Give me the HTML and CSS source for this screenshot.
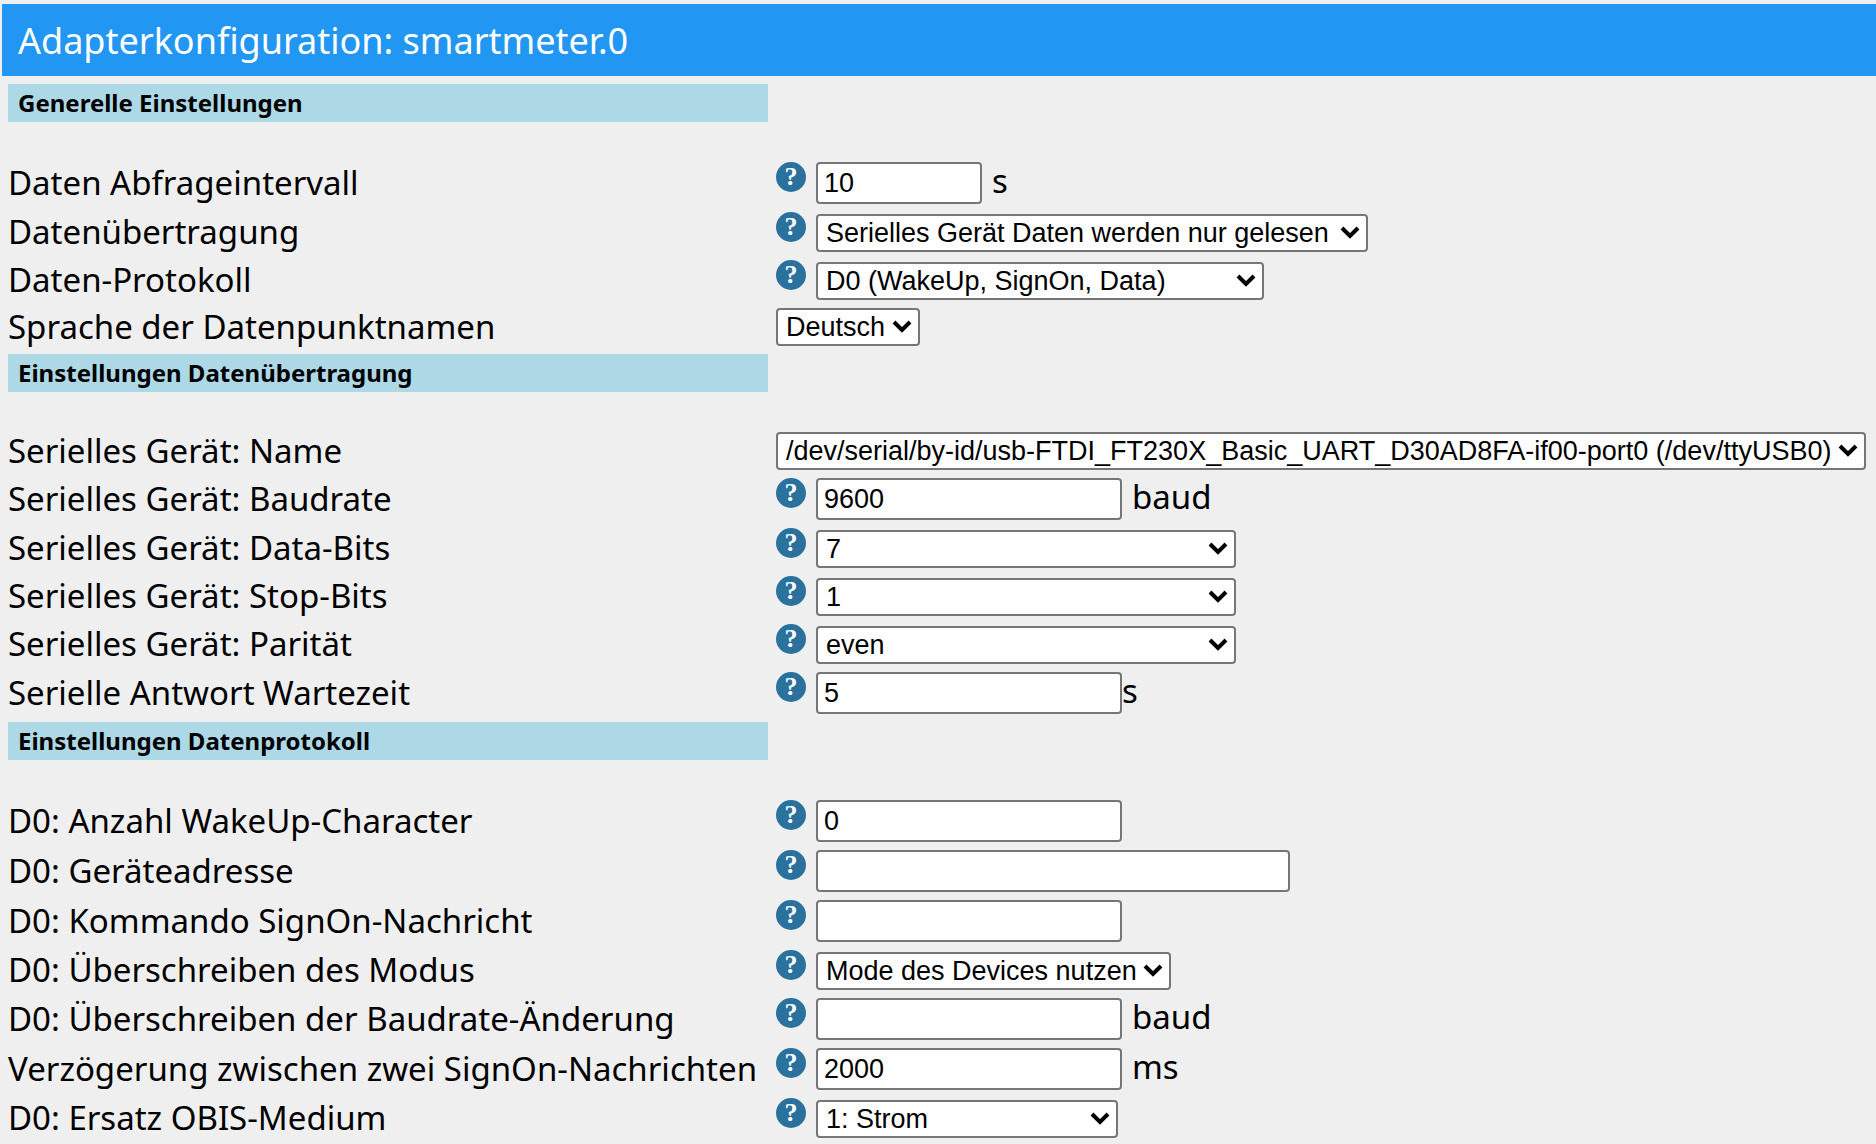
FILE: index.html
```html
<!DOCTYPE html>
<html lang="de">
<head>
<meta charset="utf-8">
<title>Adapterkonfiguration: smartmeter.0</title>
<link rel="stylesheet" href="styles.css">
</head>
<body>
<header class="header">
  <h1 class="title">Adapterkonfiguration: smartmeter.0</h1>
</header>
<main>
  <form class="settings">
    <h2 class="section">Generelle Einstellungen</h2>
    <div class="row">
      <label class="label" for="interval">Daten Abfrageintervall</label>
      <div class="field"><a class="help" href="#">?</a><input class="control input short" id="interval" type="text" value="10"><span class="unit">s</span></div>
    </div>
    <div class="row">
      <label class="label" for="transport">Datenübertragung</label>
      <div class="field"><a class="help" href="#">?</a><select class="control select transport" id="transport"><option>Serielles Gerät Daten werden nur gelesen</option></select></div>
    </div>
    <div class="row">
      <label class="label" for="protocol">Daten-Protokoll</label>
      <div class="field"><a class="help" href="#">?</a><select class="control select protocol" id="protocol"><option>D0 (WakeUp, SignOn, Data)</option></select></div>
    </div>
    <div class="row">
      <label class="label" for="language">Sprache der Datenpunktnamen</label>
      <div class="field"><select class="control select" id="language"><option>Deutsch</option></select></div>
    </div>

    <h2 class="section">Einstellungen Datenübertragung</h2>
    <div class="row">
      <label class="label" for="device">Serielles Gerät: Name</label>
      <div class="field"><select class="control select" id="device"><option>/dev/serial/by-id/usb-FTDI_FT230X_Basic_UART_D30AD8FA-if00-port0 (/dev/ttyUSB0)</option></select></div>
    </div>
    <div class="row">
      <label class="label" for="baudrate">Serielles Gerät: Baudrate</label>
      <div class="field"><a class="help" href="#">?</a><input class="control input" id="baudrate" type="text" value="9600"><span class="unit">baud</span></div>
    </div>
    <div class="row">
      <label class="label" for="databits">Serielles Gerät: Data-Bits</label>
      <div class="field"><a class="help" href="#">?</a><select class="control select serial" id="databits"><option>7</option></select></div>
    </div>
    <div class="row">
      <label class="label" for="stopbits">Serielles Gerät: Stop-Bits</label>
      <div class="field"><a class="help" href="#">?</a><select class="control select serial" id="stopbits"><option>1</option></select></div>
    </div>
    <div class="row">
      <label class="label" for="parity">Serielles Gerät: Parität</label>
      <div class="field"><a class="help" href="#">?</a><select class="control select serial" id="parity"><option>even</option></select></div>
    </div>
    <div class="row">
      <label class="label" for="timeout">Serielle Antwort Wartezeit</label>
      <div class="field"><a class="help" href="#">?</a><input class="control input" id="timeout" type="text" value="5"><span class="unit tight">s</span></div>
    </div>

    <h2 class="section">Einstellungen Datenprotokoll</h2>
    <div class="row">
      <label class="label" for="wakeup">D0: Anzahl WakeUp-Character</label>
      <div class="field"><a class="help" href="#">?</a><input class="control input" id="wakeup" type="text" value="0"></div>
    </div>
    <div class="row">
      <label class="label" for="address">D0: Geräteadresse</label>
      <div class="field"><a class="help" href="#">?</a><input class="control input long" id="address" type="text"></div>
    </div>
    <div class="row">
      <label class="label" for="signon">D0: Kommando SignOn-Nachricht</label>
      <div class="field"><a class="help" href="#">?</a><input class="control input" id="signon" type="text"></div>
    </div>
    <div class="row">
      <label class="label" for="mode">D0: Überschreiben des Modus</label>
      <div class="field"><a class="help" href="#">?</a><select class="control select" id="mode"><option>Mode des Devices nutzen</option></select></div>
    </div>
    <div class="row">
      <label class="label" for="baudchange">D0: Überschreiben der Baudrate-Änderung</label>
      <div class="field"><a class="help" href="#">?</a><input class="control input" id="baudchange" type="text"><span class="unit">baud</span></div>
    </div>
    <div class="row">
      <label class="label" for="delay">Verzögerung zwischen zwei SignOn-Nachrichten</label>
      <div class="field"><a class="help" href="#">?</a><input class="control input" id="delay" type="text" value="2000"><span class="unit">ms</span></div>
    </div>
    <div class="row">
      <label class="label" for="medium">D0: Ersatz OBIS-Medium</label>
      <div class="field"><a class="help" href="#">?</a><select class="control select medium" id="medium"><option>1: Strom</option></select></div>
    </div>
  </form>
</main>
</body>
</html>
```
FILE: styles.css
```css
* {
  box-sizing: border-box;
}

body {
  margin: 0;
  padding: 4px 0 0 2px;
  background: #efefef;
  color: #000;
  font-family: "Lucida Grande", "Noto Sans", sans-serif;
  font-size: 33px;
  line-height: 38px;
}

.header {
  padding: 13px 16px 11px;
  background: #2196f3;
  color: #fff;
}

.title {
  margin: 0;
  font-size: 36px;
  font-weight: 400;
  line-height: 48px;
}

.settings {
  display: flex;
  flex-direction: column;
  gap: 8px;
  padding: 8px 6px 6px;
}

.section {
  width: 760px;
  margin: 0 0 32px;
  padding: 0 10px;
  background: #add8e6;
  font-size: 24px;
  font-weight: 700;
  line-height: 38px;
}

.row {
  display: flex;
  align-items: center;
  gap: 8px;
}

.label {
  flex: 0 0 760px;
  white-space: nowrap;
}

.field {
  display: flex;
  align-items: flex-end;
}

.help {
  align-self: flex-start;
  width: 30px;
  height: 30px;
  margin-right: 10px;
  border-radius: 50%;
  background: #2a719d;
  color: #fff;
  font: 700 26px/30px "Liberation Serif", serif;
  text-align: center;
  text-decoration: none;
}

.control {
  margin: 0;
  border: 2px solid #767676;
  border-radius: 4px;
  background-color: #fff;
  color: #000;
  font-family: "Liberation Sans", Arial, sans-serif;
  font-size: 27px;
}

.input {
  width: 306px;
  height: 42px;
  padding: 0 6px;
}

.short {
  width: 166px;
}

.long {
  width: 474px;
}

/* two pixels of room above keep the help icon higher than the list */
.select {
  height: 38px;
  margin-top: 2px;
  padding: 0 32px 0 8px;
  appearance: none;
  background-image: url("data:image/svg+xml,%3Csvg xmlns='http://www.w3.org/2000/svg' width='20' height='14'%3E%3Cpath d='M2 2l8 8 8-8' fill='none' stroke='%23000' stroke-width='4'/%3E%3C/svg%3E");
  background-repeat: no-repeat;
  background-position: right 6px center;
}

.select:first-child {
  margin-top: 0;
}

.transport {
  width: 552px;
}

.protocol {
  width: 448px;
}

.serial {
  width: 420px;
}

.medium {
  width: 302px;
}

.unit {
  margin-left: 10px;
  padding-bottom: 4px;
}

.tight {
  margin-left: 0;
}
```
